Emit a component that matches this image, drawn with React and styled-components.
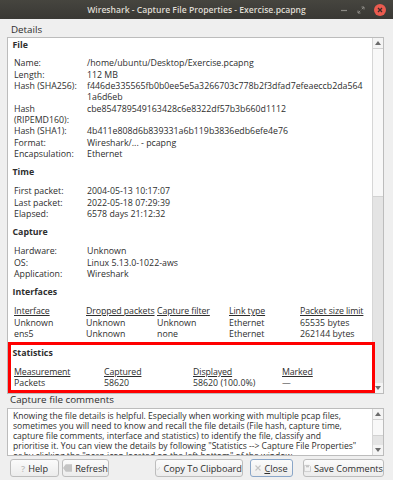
import React from "react";
import styled, { createGlobalStyle } from "styled-components";

const GlobalStyle = createGlobalStyle`
  *, *::before, *::after { box-sizing: border-box; }
  html, body { margin: 0; padding: 0; background: #efefef; }
  body { font-family: "Open Sans", "Noto Sans", sans-serif; color: #2e2e2e; }
`;

const Window = styled.div`
  width: 393px;
  height: 480px;
  display: flex;
  flex-direction: column;
  background: #efefef;
  overflow: hidden;
`;

const TitleBar = styled.div`
  height: 19px;
  flex: none;
  background: linear-gradient(#46453f, #393834);
  display: grid;
  grid-template-columns: 1fr auto 1fr;
  align-items: center;
  color: #dfdbd2;
  font-size: 8.6px;
  font-weight: 600;
`;

const Title = styled.div`
  grid-column: 2;
  white-space: nowrap;
`;

const Controls = styled.div`
  grid-column: 3;
  justify-self: end;
  display: flex;
  align-items: center;
  gap: 9px;
  padding-right: 7px;
`;

const CloseDot = styled.div`
  width: 12px;
  height: 12px;
  border-radius: 50%;
  background: #ea5b4f;
  display: flex;
  align-items: center;
  justify-content: center;
`;

const Body = styled.div`
  flex: 1;
  display: flex;
  flex-direction: column;
  padding: 0 9px 0 7px;
`;

const Caption = styled.div`
  font-size: 9.8px;
  line-height: 11px;
  padding-left: ${(p) => p.indent || 4}px;
  margin: ${(p) => p.margin};
  white-space: nowrap;
  flex: none;
`;

const Frame = styled.div`
  display: flex;
  border: 1px solid #bcbcbc;
  background: #fff;
  height: ${(p) => p.h}px;
  flex: none;
`;

const Content = styled.div`
  flex: 1;
  position: relative;
  padding: 1.5px 0 0 4.5px;
  font-size: 8.8px;
  line-height: 11.3px;
`;

const Heading = styled.div`
  font-weight: 700;
  margin-bottom: 7.7px;
`;

const Rows = styled.div`
  display: grid;
  grid-template-columns: ${(p) => p.cols};
  margin: 0 0 ${(p) => (p.last ? 0 : 7.2)}px 1.5px;
  white-space: nowrap;
`;

const Cell = styled.div`
  text-decoration: ${(p) => (p.head ? "underline" : "none")};
  letter-spacing: ${(p) => (p.head ? "-0.1px" : "0")};
`;

const Highlight = styled.div`
  border: 3px solid #ff0000;
  margin: 1.5px -3px 0 -4.5px;
  padding: 3.3px 0 0 1.5px;
  position: relative;
  z-index: 1;
`;

const Scrollbar = styled.div`
  width: 11px;
  flex: none;
  display: flex;
  flex-direction: column;
  border-left: 1px solid #d6d6d6;
  background: #e4e4e4;
`;

const Arrow = styled.div`
  height: 10px;
  flex: none;
  background: #f4f4f4;
  display: flex;
  align-items: center;
  justify-content: center;
`;

const Thumb = styled.div`
  height: ${(p) => p.h}px;
  flex: none;
  background: #f8f8f8;
  border-top: 1px solid #d2d2d2;
  border-bottom: 1px solid #d2d2d2;
`;

const Track = styled.div`
  flex: 1;
`;

const CommentText = styled.div`
  flex: 1;
  overflow: hidden;
  padding: 3px 0 0 5px;
  font-size: 8.55px;
  line-height: 9.9px;
  color: #2e2e2e;
`;

const Line = styled.div`
  white-space: nowrap;
`;

const ButtonRow = styled.div`
  display: flex;
  align-items: center;
  margin-top: 3px;
  padding-left: 3px;
  flex: none;
`;

const Button = styled.div`
  width: ${(p) => p.w}px;
  height: 18px;
  margin-left: ${(p) => p.gap || 0}px;
  border: 1px solid ${(p) => (p.focus ? "#8aa6c8" : "#bdbdbd")};
  border-radius: 3px;
  background: linear-gradient(#fbfbfb, #ececec);
  display: flex;
  align-items: center;
  justify-content: center;
  gap: 3px;
  font-size: 9.2px;
  color: #2e2e2e;
  white-space: nowrap;
  flex: none;
`;

const Spacer = styled.div`
  flex: 1;
`;

const Mnemonic = styled.span`
  text-decoration: underline;
`;

const HelpMark = styled.span`
  color: #bdbdbd;
  font-weight: 600;
`;

const UpArrow = () => (
  <svg width="6" height="4" viewBox="0 0 6 4">
    <path d="M0 4 L3 0 L6 4 Z" fill="#6b6b6b" />
  </svg>
);

const DownArrow = () => (
  <svg width="6" height="4" viewBox="0 0 6 4">
    <path d="M0 0 L3 4 L6 0 Z" fill="#6b6b6b" />
  </svg>
);

const fileRows = [
  ["Name:", "/home/ubuntu/Desktop/Exercise.pcapng"],
  ["Length:", "112 MB"],
  ["Hash (SHA256):", "f446de335565fb0b0ee5e5a3266703c778b2f3dfad7efeaeccb2da564\n1a6d6eb"],
  ["Hash\n(RIPEMD160):", "cbe854789549163428c6e8322df57b3b660d1112"],
  ["Hash (SHA1):", "4b411e808d6b839331a6b119b3836edb6efe4e76"],
  ["Format:", "Wireshark/... - pcapng"],
  ["Encapsulation:", "Ethernet"],
];

const timeRows = [
  ["First packet:", "2004-05-13 10:17:07"],
  ["Last packet:", "2022-05-18 07:29:39"],
  ["Elapsed:", "6578 days 21:12:32"],
];

const captureRows = [
  ["Hardware:", "Unknown"],
  ["OS:", "Linux 5.13.0-1022-aws"],
  ["Application:", "Wireshark"],
];

const ifaceHead = ["Interface", "Dropped packets", "Capture filter", "Link type", "Packet size limit"];
const ifaceRows = [
  ["Unknown", "Unknown", "Unknown", "Ethernet", "65535 bytes"],
  ["ens5", "Unknown", "none", "Ethernet", "262144 bytes"],
];

const statHead = ["Measurement", "Captured", "Displayed", "Marked"];
const statRows = [["Packets", "58620", "58620 (100.0%)", "\u2014"]];

const comments = [
  "Knowing the file details is helpful. Especially when working with multiple pcap files,",
  "sometimes you will need to know and recall the file details (File hash, capture time,",
  "capture file comments, interface and statistics) to identify the file, classify and",
  "prioritise it. You can view the details by following \"Statistics --> Capture File Properties\"",
  "or by clicking the \"pcap icon located on the left bottom\" of the window.",
];

const split = (t) => t.split("\n").map((s, i) => <div key={i}>{s}</div>);

const KeyValue = ({ rows }) => (
  <Rows cols="73px 1fr">
    {rows.map(([k, v]) => (
      <React.Fragment key={k}>
        <Cell>{split(k)}</Cell>
        <Cell>{split(v)}</Cell>
      </React.Fragment>
    ))}
  </Rows>
);

const Table = ({ cols, head, rows }) => (
  <Rows cols={cols} last>
    {head.map((h) => (
      <Cell head key={h}>{h}</Cell>
    ))}
    {rows.map((r, i) => r.map((c, j) => <Cell key={i + "-" + j}>{c}</Cell>))}
  </Rows>
);

const App = () => {
  return (
    <Window>
      <GlobalStyle />
      <TitleBar>
        <Title>Wireshark - Capture File Properties - Exercise.pcapng</Title>
        <Controls>
          <svg width="8" height="8" viewBox="0 0 8 8">
            <path d="M1 4.5 H7" stroke="#8c8a85" strokeWidth="1.2" />
          </svg>
          <svg width="8" height="8" viewBox="0 0 8 8">
            <path d="M4.5 1 H7 V3.5 M7 1 L4.8 3.2 M3.5 7 H1 V4.5 M1 7 L3.2 4.8" stroke="#8c8a85" strokeWidth="1" fill="none" />
          </svg>
          <CloseDot>
            <svg width="6" height="6" viewBox="0 0 6 6">
              <path d="M1 1 L5 5 M5 1 L1 5" stroke="#3b2a28" strokeWidth="1.3" />
            </svg>
          </CloseDot>
        </Controls>
      </TitleBar>
      <Body>
        <Caption margin="5px 0 2px">Details</Caption>
        <Frame h={357}>
          <Content>
            <Heading>File</Heading>
            <KeyValue rows={fileRows} />
            <Heading>Time</Heading>
            <KeyValue rows={timeRows} />
            <Heading>Capture</Heading>
            <KeyValue rows={captureRows} />
            <Heading>Interfaces</Heading>
            <Table cols="72px 71px 72px 71px 1fr" head={ifaceHead} rows={ifaceRows} />
            <Highlight>
              <Heading>Statistics</Heading>
              <Table cols="90px 89px 89px 1fr" head={statHead} rows={statRows} />
            </Highlight>
          </Content>
          <Scrollbar>
            <Arrow><UpArrow /></Arrow>
            <Thumb h={149} />
            <Track />
            <Arrow><DownArrow /></Arrow>
          </Scrollbar>
        </Frame>
        <Caption indent={3} margin="0 0 3px">Capture file comments</Caption>
        <Frame h={48}>
          <CommentText>
            {comments.map((c) => (
              <Line key={c}>{c}</Line>
            ))}
          </CommentText>
          <Scrollbar>
            <Arrow><UpArrow /></Arrow>
            <Thumb h={17} />
            <Track />
            <Arrow><DownArrow /></Arrow>
          </Scrollbar>
        </Frame>
        <ButtonRow>
          <Button w={49}>
            <HelpMark>?</HelpMark> Help
          </Button>
          <Button w={47} gap={3}>
            <svg width="10" height="8" viewBox="0 0 10 8">
              <path d="M3 0 H10 V8 H3 L0 4 Z" fill="#c4c4c4" />
            </svg>
            Refresh
          </Button>
          <Spacer />
          <Button w={88}>
            <svg width="8" height="7" viewBox="0 0 8 7">
              <path d="M0.5 4 L3 6.3 L7.5 0.7" stroke="#c4c4c4" strokeWidth="1.2" fill="none" />
            </svg>
            Copy To Clipboard
          </Button>
          <Button w={43} gap={7} focus>
            <svg width="6" height="6" viewBox="0 0 6 6">
              <path d="M0.5 0.5 L5.5 5.5 M5.5 0.5 L0.5 5.5" stroke="#c4c4c4" strokeWidth="1.1" />
            </svg>
            <span><Mnemonic>C</Mnemonic>lose</span>
          </Button>
          <Button w={81} gap={10}>
            <svg width="9" height="9" viewBox="0 0 9 9">
              <path d="M0.5 0.5 H7 L8.5 2 V8.5 H0.5 Z" fill="none" stroke="#c4c4c4" />
              <rect x="2.5" y="0.5" width="4" height="2.5" fill="#c4c4c4" />
            </svg>
            Save Comments
          </Button>
        </ButtonRow>
      </Body>
    </Window>
  );
};

export default App;
